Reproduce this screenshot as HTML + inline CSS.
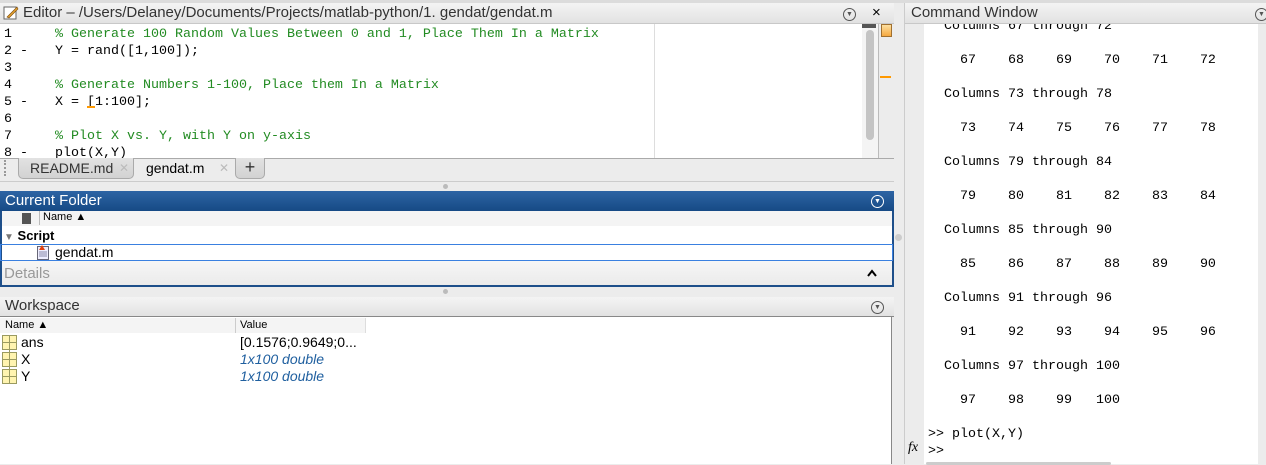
<!DOCTYPE html>
<html><head><style>
*{margin:0;padding:0;box-sizing:border-box}
body{width:1266px;height:464px;background:#ececec;position:relative;overflow:hidden;font-family:"Liberation Sans",sans-serif;font-size:13px;color:#000}
.a{position:absolute}
.mono{font-family:"Liberation Mono","DejaVu Sans Mono",monospace;font-size:13.33px;white-space:pre}
.tb{background:linear-gradient(#f4f4f4,#e2e2e2);border-bottom:1px solid #c8c8c8}
.dd{width:13px;height:13px;border:1px solid #555;border-radius:50%;font-size:7px;line-height:11px;text-align:center;color:#555}
.c{color:#228b22}
</style></head><body>
<div class="a" style="left:0;top:0;width:1266px;height:3px;background:#dcdcdc"></div>
<div class="a tb" style="left:0;top:3px;width:894px;height:21px"></div>
<svg class="a" style="left:3px;top:5px" width="16" height="16"><rect x="1" y="2" width="12" height="12" fill="#fff" stroke="#666"/><path d="M4 12 L14 2 L15 4 L6 13Z" fill="#e0a030" stroke="#7a4a10" stroke-width=".6"/></svg>
<div class="a" style="left:23px;top:4px;font-size:15px;color:#333">Editor – /Users/Delaney/Documents/Projects/matlab-python/1. gendat/gendat.m</div>
<div class="a dd" style="left:843px;top:8px">▼</div>
<div class="a" style="left:872px;top:4px;font-size:15px">×</div>
<div class="a" style="left:0;top:24px;width:878px;height:134px;background:#fff"></div>
<div class="a" style="left:654px;top:24px;width:1px;height:134px;background:#ddd"></div>
<div class="a" style="left:862px;top:24px;width:16px;height:134px;background:#f4f4f4"></div>
<div class="a" style="left:862px;top:24px;width:14px;height:4px;background:#555"></div>
<div class="a" style="left:866px;top:30px;width:8px;height:110px;background:#c4c4c4;border-radius:4px"></div>
<div class="a" style="left:878px;top:24px;width:16px;height:134px;background:#ececec;border-left:1px solid #bbb"></div>
<div class="a" style="left:881px;top:24px;width:11px;height:13px;background:linear-gradient(#fde0a0,#f5a840);border:1px solid #a07030"></div>
<div class="a" style="left:880px;top:76px;width:11px;height:2px;background:#f90"></div>
<div class="a mono" style="left:4px;top:26px;line-height:17px">1
2 -
3
4
5 -
6
7
8 -</div>
<div class="a mono" style="left:55px;top:26px;line-height:17px"><span class="c">% Generate 100 Random Values Between 0 and 1, Place Them In a Matrix</span>
Y = rand([1,100]);

<span class="c">% Generate Numbers 1-100, Place them In a Matrix</span>
X = [1:100];

<span class="c">% Plot X vs. Y, with Y on y-axis</span>
plot(X,Y)</div>
<div class="a" style="left:87px;top:106px;width:8px;height:2px;background:#f90"></div>
<div class="a" style="left:0;top:158px;width:894px;height:23px;background:#ececec;border-top:1px solid #aaa"></div>
<div class="a" style="left:4px;top:160px;width:2px;height:16px;border-left:2px dotted #999"></div>
<div class="a" style="left:18px;top:158px;width:116px;height:21px;background:linear-gradient(#e2e2e2,#d2d2d2);border:1px solid #aaa;border-top:none;border-radius:0 0 5px 5px"></div>
<div class="a" style="left:30px;top:160px;font-size:14px;color:#333">README.md</div>
<div class="a" style="left:119px;top:161px;font-size:12px;color:#bbb">✕</div>
<div class="a" style="left:146px;top:160px;font-size:14px">gendat.m</div>
<div class="a" style="left:219px;top:161px;font-size:12px;color:#bbb">✕</div>
<div class="a" style="left:235px;top:158px;width:30px;height:21px;background:linear-gradient(#e2e2e2,#d2d2d2);border:1px solid #aaa;border-top:none;border-radius:0 0 5px 5px;text-align:center;font-size:18px;line-height:19px;color:#333">+</div>
<div class="a" style="left:0;top:181px;width:894px;height:1px;background:#ccc"></div>
<div class="a" style="left:443px;top:184px;width:5px;height:5px;border-radius:50%;background:#bbb"></div>
<div class="a" style="left:0;top:191px;width:894px;height:96px;border:2px solid #1e4f8a;border-top:none;background:#fff"></div>
<div class="a" style="left:0;top:191px;width:894px;height:20px;background:linear-gradient(#2d64a4,#164a85)"></div>
<div class="a" style="left:5px;top:192px;font-size:15px;color:#fff">Current Folder</div>
<div class="a dd" style="left:871px;top:195px;border-color:#fff;color:#fff">▼</div>
<div class="a" style="left:2px;top:211px;width:890px;height:15px;background:#f4f4f4"></div>
<div class="a" style="left:22px;top:213px;width:9px;height:11px;background:#555"></div>
<div class="a" style="left:39px;top:211px;width:1px;height:14px;background:#bbb"></div>
<div class="a" style="left:43px;top:211px;font-size:11px">Name ▲</div>
<div class="a" style="left:4px;top:228px;font-size:13px;font-weight:bold"><span style="color:#777;font-size:10px">▼</span> Script</div>
<div class="a" style="left:0;top:244px;width:893px;height:17px;border:1px solid #3a80e0"></div>
<svg class="a" style="left:36px;top:244px" width="14" height="16"><rect x="1.5" y="2.5" width="11" height="13" fill="#eef" stroke="#667"/><path d="M3 8h8M3 10h8M3 12h8" stroke="#88a"/><path d="M3 6 L6 1 L9 6Z" fill="#e04010"/></svg>
<div class="a" style="left:55px;top:244px;font-size:14px">gendat.m</div>
<div class="a" style="left:2px;top:261px;width:890px;height:24px;background:linear-gradient(#f6f6f6,#ebebeb)"></div>
<div class="a" style="left:4px;top:265px;font-size:15px;color:#999">Details</div>
<svg class="a" style="left:866px;top:268px" width="12" height="10"><path d="M2 8 L6 3 L10 8" fill="none" stroke="#000" stroke-width="2"/></svg>
<div class="a" style="left:443px;top:289px;width:5px;height:5px;border-radius:50%;background:#bbb"></div>
<div class="a tb" style="left:0;top:297px;width:894px;height:20px;border-bottom:1px solid #888"></div>
<div class="a" style="left:5px;top:297px;font-size:15px;color:#333">Workspace</div>
<div class="a dd" style="left:871px;top:301px">▼</div>
<div class="a" style="left:0;top:317px;width:892px;height:147px;background:#fff;border-right:1px solid #888"></div>
<div class="a" style="left:0;top:318px;width:366px;height:15px;background:#f4f4f4;border-right:1px solid #ddd"></div>
<div class="a" style="left:235px;top:318px;width:1px;height:15px;background:#ccc"></div>
<div class="a" style="left:5px;top:319px;font-size:11px">Name ▲</div>
<div class="a" style="left:240px;top:319px;font-size:11px">Value</div>
<svg class="a" style="left:2px;top:335px" width="16" height="50"><g fill="#fff4b0" stroke="#9a9a60"><rect x=".5" y=".5" width="14" height="14"/><rect x=".5" y="17.5" width="14" height="14"/><rect x=".5" y="34.5" width="14" height="14"/></g><path d="M7.5 0v49M0 7.5h15M0 24.5h15M0 41.5h15" stroke="#9a9a60"/></svg>
<div class="a" style="left:21px;top:334px;font-size:14px;line-height:17px">ans<br>X<br>Y</div>
<div class="a" style="left:240px;top:334px;font-size:14px;line-height:17px">[0.1576;0.9649;0...<br><i style="color:#1f5f9f">1x100 double</i><br><i style="color:#1f5f9f">1x100 double</i></div>
<div class="a" style="left:904px;top:3px;width:1px;height:461px;background:#ccc"></div>
<div class="a tb" style="left:905px;top:3px;width:361px;height:21px"></div>
<div class="a" style="left:911px;top:4px;font-size:15px;color:#333">Command Window</div>
<div class="a dd" style="left:1255px;top:8px">▼</div>
<div class="a" style="left:895px;top:234px;width:7px;height:7px;border-radius:50%;background:#ccc"></div>
<div class="a" style="left:924px;top:24px;width:334px;height:440px;background:#fff"></div>
<div class="a" style="left:926px;top:462px;width:185px;height:3px;background:#ccc;border-radius:2px"></div>
<div class="a" style="left:924px;top:24px;width:334px;height:440px;overflow:hidden">
<div class="a mono" style="left:4px;top:-6px;line-height:17px">  Columns 67 through 72

    67    68    69    70    71    72

  Columns 73 through 78

    73    74    75    76    77    78

  Columns 79 through 84

    79    80    81    82    83    84

  Columns 85 through 90

    85    86    87    88    89    90

  Columns 91 through 96

    91    92    93    94    95    96

  Columns 97 through 100

    97    98    99   100

&gt;&gt; plot(X,Y)
&gt;&gt; </div></div>
<div class="a" style="left:908px;top:440px;font-family:'Liberation Serif',serif;font-style:italic;font-size:14px">fx</div>
</body></html>
